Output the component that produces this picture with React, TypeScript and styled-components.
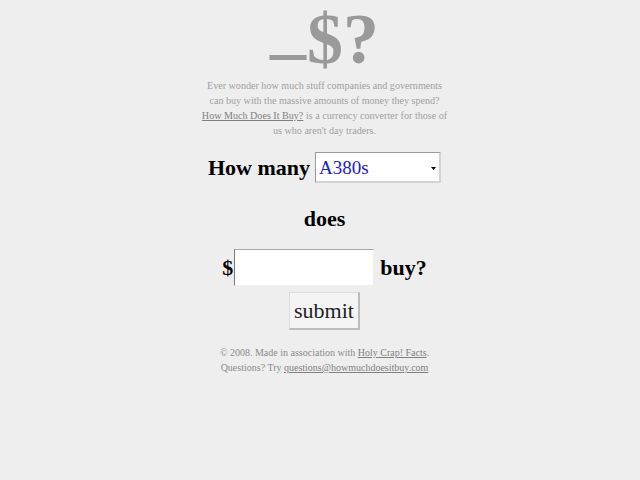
import React from "react";
import styled, { createGlobalStyle } from "styled-components";

const Global = createGlobalStyle`
  html, body { margin: 0; padding: 0; background: #eeeeee; }
  body { font-family: "Liberation Serif", "Times New Roman", serif; }
`;

const Page = styled.div`
  display: flex;
  flex-direction: column;
  align-items: center;
  padding-left: 9px;
`;

const Logo = styled.h1`
  margin: 0;
  font-family: "Liberation Serif", "Times New Roman", serif;
  font-size: 72px;
  font-weight: 700;
  color: #9a9a9a;
  line-height: 78px;
`;

const Under = styled.span`
  position: relative;
  top: -13px;
  margin-right: 1px;
`;

const Intro = styled.p`
  margin: 0;
  width: 250px;
  text-align: center;
  font-size: 10.1px;
  line-height: 15px;
  color: #9e9e9e;
`;

const Link = styled.a`
  color: #808080;
  text-decoration: underline;
`;

const Form = styled.form`
  display: flex;
  flex-direction: column;
  align-items: center;
  margin-top: 14px;
`;

const Row = styled.div<{ $mt?: number }>`
  display: flex;
  align-items: center;
  gap: 6px;
  margin-top: ${(p) => p.$mt ?? 0}px;
  font-size: 22px;
  font-weight: bold;
  color: #000;
`;

const SelectWrap = styled.div`
  position: relative;
  width: 126px;
  height: 31px;
  margin-left: -1px;
`;

const Select = styled.select`
  appearance: none;
  -webkit-appearance: none;
  box-sizing: border-box;
  width: 100%;
  height: 100%;
  margin: 0;
  padding: 0 0 0 3px;
  background: #ffffff;
  border-style: solid;
  border-width: 1px 2px 2px 1px;
  border-color: #9a9a9a #d4d4d4 #d4d4d4 #9a9a9a;
  border-radius: 0;
  font-family: "Liberation Serif", "Times New Roman", serif;
  font-size: 19px;
  color: #2020cc;
  outline: none;
`;

const Arrow = styled.svg`
  position: absolute;
  right: 5px;
  top: 15px;
  pointer-events: none;
`;

const Input = styled.input`
  box-sizing: border-box;
  width: 140px;
  height: 37px;
  margin: 0;
  background: #ffffff;
  border-style: solid;
  border-width: 1px;
  border-color: #a8a8a8 #eeeeee #eeeeee #7a7a7a;
  border-radius: 0;
  outline: none;
`;

const Dollar = styled.span`
  margin-right: -5px;
`;

const Submit = styled.button`
  box-sizing: border-box;
  width: 71px;
  height: 38px;
  margin-top: 6px;
  padding: 0;
  background: #f4f4f4;
  border-style: solid;
  border-width: 1px 2px 2px 1px;
  border-color: #dcdcdc #bcbcbc #bcbcbc #dcdcdc;
  border-radius: 0;
  font-family: "Liberation Serif", "Times New Roman", serif;
  font-size: 22px;
  color: #222;
`;

const Footer = styled.p`
  margin: 15px 0 0;
  text-align: center;
  font-size: 10px;
  line-height: 15px;
  color: #8a8a8a;
`;

export default function App() {
  return (
    <>
      <Global />
      <Page>
        <Logo>
          <Under>_</Under>$?
        </Logo>
        <Intro>
          Ever wonder how much stuff companies and governments can buy with the
          massive amounts of money they spend? <Link href="#">How Much Does It Buy?</Link>{" "}
          is a currency converter for those of us who aren't day traders.
        </Intro>
        <Form onSubmit={(e) => e.preventDefault()}>
          <Row>
            <span>How many</span>
            <SelectWrap>
              <Select defaultValue="A380s">
                <option>A380s</option>
              </Select>
              <Arrow width="5" height="3" viewBox="0 0 5 3">
                <path d="M0 0 H5 L2.5 3 Z" fill="#000" />
              </Arrow>
            </SelectWrap>
          </Row>
          <Row $mt={23}>does</Row>
          <Row $mt={17}>
            <Dollar>$</Dollar>
            <Input type="text" />
            <span>buy?</span>
          </Row>
          <Submit type="submit">submit</Submit>
        </Form>
        <Footer>
          © 2008. Made in association with <Link href="#">Holy Crap! Facts</Link>.
          <br />
          Questions? Try <Link href="#">questions@howmuchdoesitbuy.com</Link>
        </Footer>
      </Page>
    </>
  );
}
